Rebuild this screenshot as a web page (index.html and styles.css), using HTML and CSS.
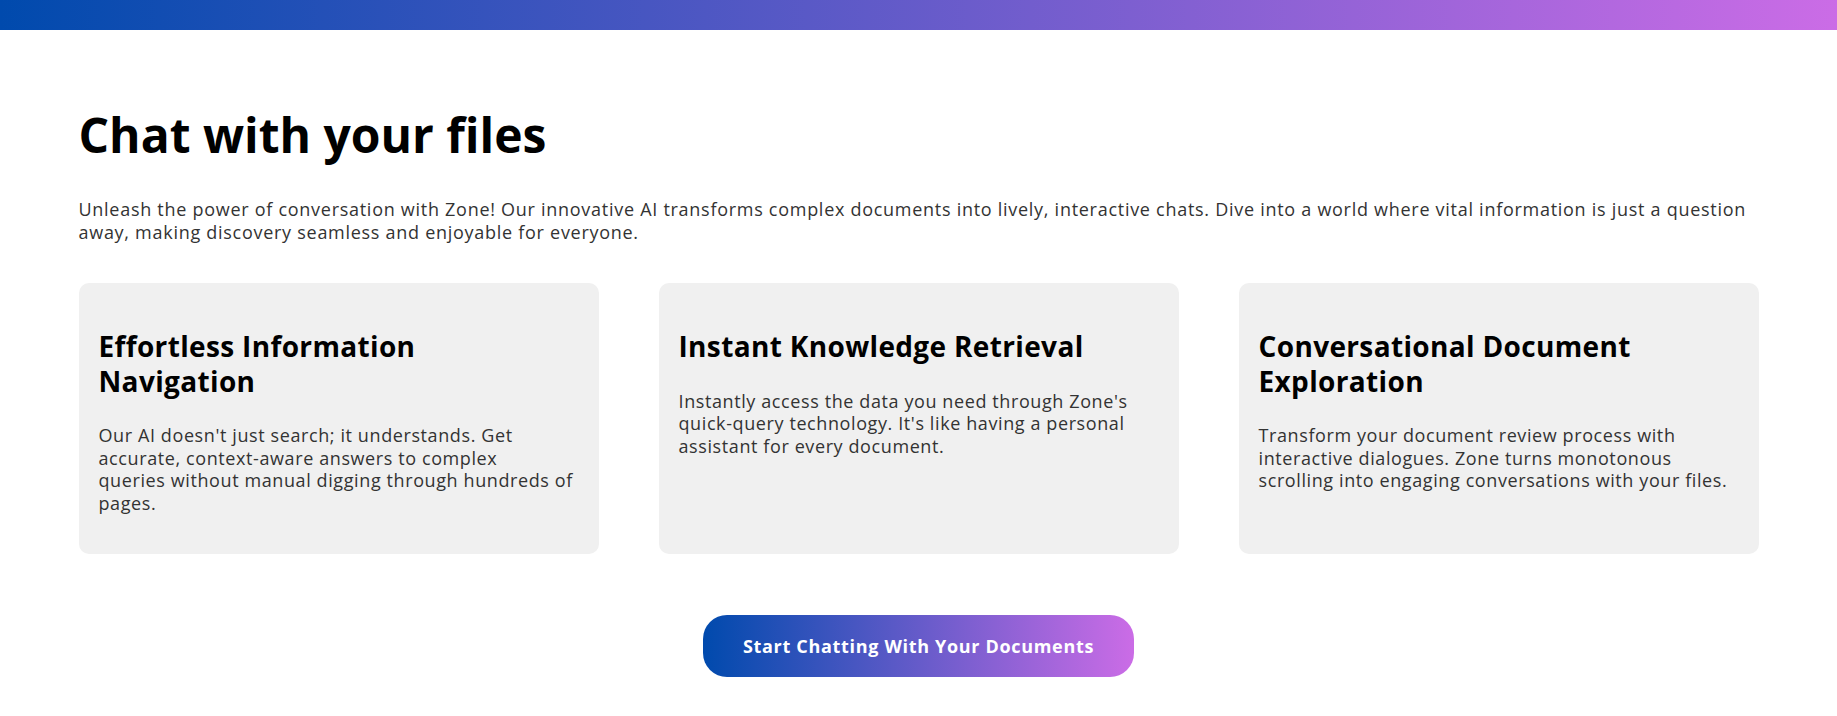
FILE: index.html
```html
<!DOCTYPE html>
<html lang="en">
<head>
<meta charset="utf-8">
<title>Chat with your files</title>
<link rel="stylesheet" href="styles.css">
</head>
<body>
<div class="topbar"></div>
<main class="container">
  <h1 class="title">Chat with your files</h1>
  <p class="lead">Unleash the power of conversation with Zone! Our innovative AI transforms complex documents into lively, interactive chats. Dive into a world where vital information is just a question away, making discovery seamless and enjoyable for everyone.</p>
  <section class="cards">
    <article class="card">
      <h3 class="card-title">Effortless Information Navigation</h3>
      <p class="card-text">Our AI doesn't just search; it understands. Get accurate, context-aware answers to complex<br>queries without manual digging through hundreds of pages.</p>
    </article>
    <article class="card">
      <h3 class="card-title">Instant Knowledge Retrieval</h3>
      <p class="card-text">Instantly access the data you need through Zone's quick-query technology. It's like having a personal assistant for every document.</p>
    </article>
    <article class="card">
      <h3 class="card-title">Conversational Document Exploration</h3>
      <p class="card-text">Transform your document review process with interactive dialogues. Zone turns monotonous scrolling into engaging conversations with your files.</p>
    </article>
  </section>
  <div class="cta-row">
    <a class="cta" href="#">Start Chatting With Your Documents</a>
  </div>
</main>
</body>
</html>
```
FILE: styles.css
```css
* { box-sizing: border-box; }
html, body { margin: 0; padding: 0; background: #fff; }
body {
  font-family: "Open Sans", "Noto Sans", "Liberation Sans", sans-serif;
  color: #333;
}
.topbar {
  height: 30px;
  background: linear-gradient(90deg, #004aad 0%, #cb6ce6 100%);
}
.container {
  max-width: 1680px;
  margin: 0 auto;
  padding: 76px 0 39px;
}
.title {
  margin: 0;
  font-size: 48px;
  line-height: 58px;
  font-weight: 700;
  color: #000;
}
.lead {
  margin: 34px 0 40px;
  font-size: 18px;
  line-height: 22.6px;
  letter-spacing: 0.72px;
  color: #333;
}
.cards {
  display: grid;
  grid-template-columns: repeat(3, 1fr);
  gap: 60px;
}
.card {
  background: #f0f0f0;
  border-radius: 10px;
  padding: 20px;
}
.card-title {
  margin: 26px 0 26px;
  font-size: 28px;
  line-height: 34.4px;
  letter-spacing: 0.35px;
  font-weight: 700;
  color: #000;
}
.card-text {
  margin: 0 -8px 20px 0;
  font-size: 18px;
  line-height: 22.6px;
  letter-spacing: 0.6px;
  color: #333;
}
.cta-row {
  display: flex;
  justify-content: center;
  margin-top: 61px;
}
.cta {
  display: inline-block;
  padding: 20px 40px;
  line-height: 22px;
  font-size: 18px;
  font-weight: 700;
  letter-spacing: 0.68px;
  color: #fff;
  text-decoration: none;
  border-radius: 24px;
  background: linear-gradient(90deg, #004aad 0%, #cb6ce6 100%);
}
```
